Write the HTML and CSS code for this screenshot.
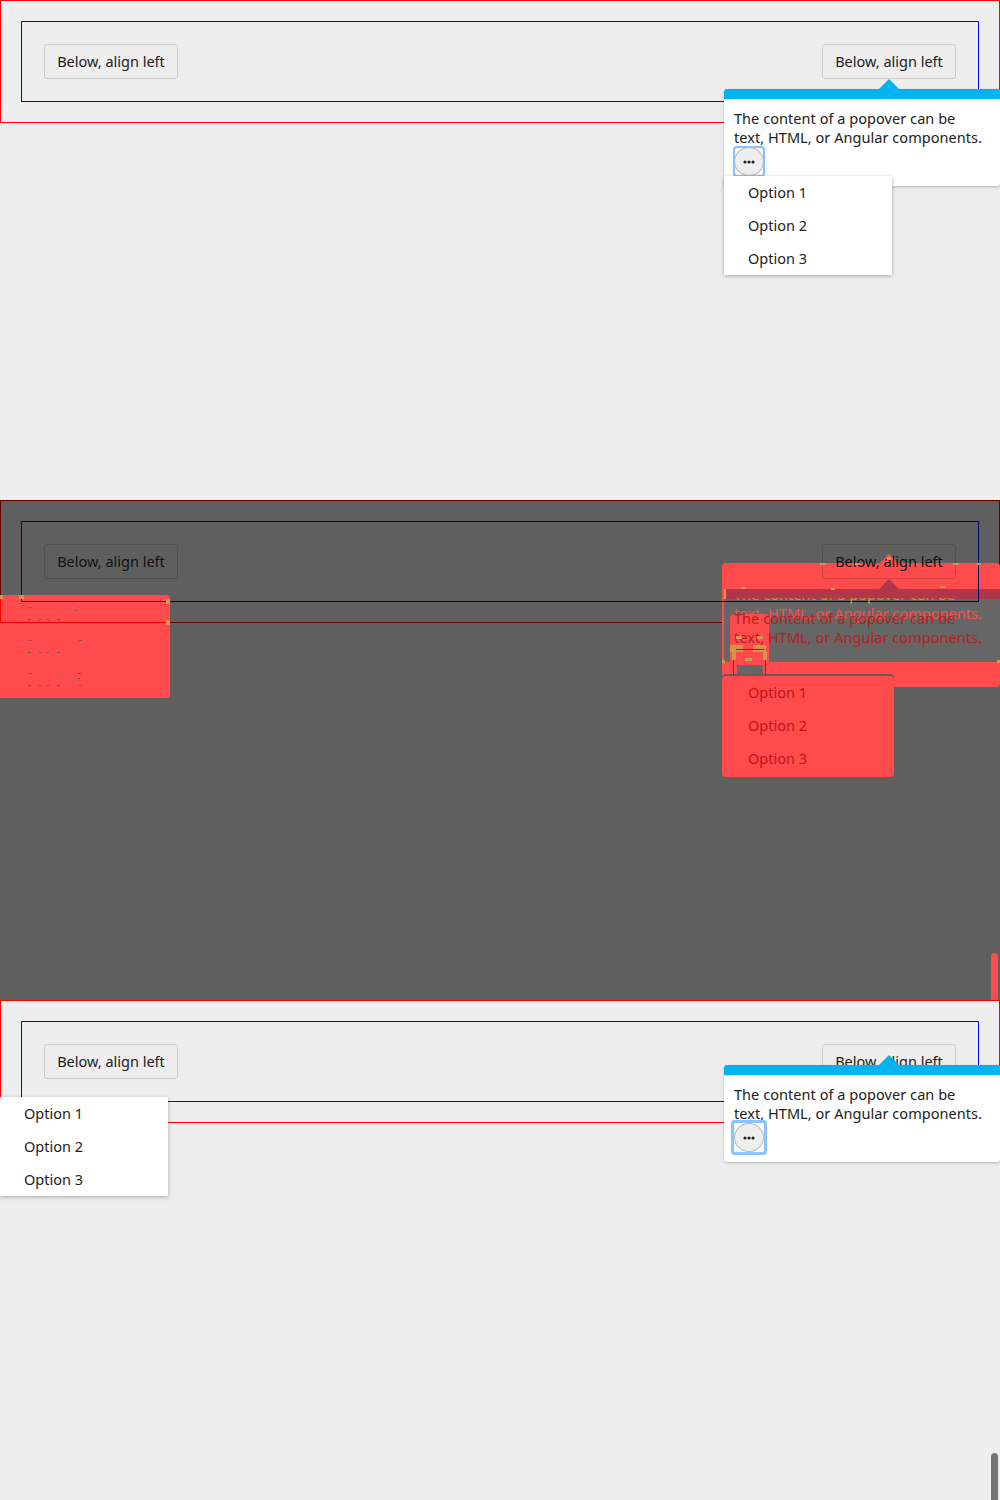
FILE: index.html
```html
<!DOCTYPE html>
<html lang="en">
<head>
<meta charset="utf-8">
<title>Popover visual diff</title>
<link rel="stylesheet" href="styles.css">
</head>
<body>

<section class="shot">
  <div class="host"><div class="box"><button class="btn">Below, align left</button><button class="btn">Below, align left</button></div></div>
  <div class="popover popover-a">
    <span class="arrow"></span>
    <div class="pop-head"></div>
    <div class="pop-body">
      <p class="pop-text">The content of a popover can be text, HTML, or Angular components.</p>
      <button class="more more-thin"><svg width="12" height="4" viewBox="0 0 12 4"><circle cx="2" cy="2" r="1.6"/><circle cx="6" cy="2" r="1.6"/><circle cx="10" cy="2" r="1.6"/></svg></button>
    </div>
  </div>
  <ul class="menu menu-a"><li>Option 1</li><li>Option 2</li><li>Option 3</li></ul>
</section>

<section class="shot shot-diff">
  <div class="diff-menu"><i class="line-h"></i><i class="line-v"></i></div>
  <div class="diff-pop"></div>
  <div class="diff-arrow-top"></div>
  <div class="diff-band"></div>
  <div class="diff-arrow-low"></div>
  <div class="diff-same"></div>
  <div class="diff-more"></div>
  <div class="diff-gap"></div>
  <div class="diff-popmenu"></div>
  <div class="host"><div class="box"><button class="btn">Below, align left</button><button class="btn">Below, align left</button></div></div>
  <p class="ghost pop-text ghost-frag">The content of a popover can be</p>
  <p class="ghost pop-text ghost-b">text, HTML, or Angular components.</p>
  <p class="ghost pop-text ghost-a">The content of a popover can be text, HTML, or Angular components.</p>
  <ul class="menu-text"><li>Option 1</li><li>Option 2</li><li>Option 3</li></ul>
  <svg class="specks" width="1000" height="500" viewBox="0 0 1000 500">
    <g class="speck-dark">
      <rect x="28" y="107" width="2" height="1"/><rect x="31" y="107" width="1" height="1"/><rect x="58" y="109" width="1" height="1"/><rect x="75" y="110" width="2" height="1"/><rect x="78" y="107" width="1" height="1"/>
      <rect x="28" y="119" width="3" height="1"/><rect x="39" y="119" width="2" height="1"/><rect x="47" y="119" width="2" height="1"/><rect x="57" y="119" width="3" height="1"/>
      <rect x="28" y="140" width="2" height="1"/><rect x="31" y="140" width="1" height="1"/><rect x="58" y="143" width="1" height="1"/><rect x="79" y="140" width="3" height="1"/>
      <rect x="28" y="152" width="3" height="1"/><rect x="39" y="152" width="2" height="1"/><rect x="47" y="152" width="2" height="1"/><rect x="57" y="152" width="3" height="1"/>
      <rect x="28" y="173" width="2" height="1"/><rect x="31" y="173" width="1" height="1"/><rect x="58" y="176" width="1" height="1"/><rect x="78" y="173" width="3" height="1"/><rect x="78" y="178" width="2" height="1"/>
      <rect x="28" y="185" width="3" height="1"/><rect x="39" y="185" width="2" height="1"/><rect x="47" y="185" width="2" height="1"/><rect x="57" y="185" width="3" height="1"/><rect x="79" y="185" width="2" height="1"/>
    </g>
    <g class="speck-orange">
      <rect x="0" y="95" width="3" height="4"/><rect x="19" y="95" width="5" height="4"/><rect x="166" y="99" width="4" height="5"/><rect x="166" y="120" width="4" height="5"/>
      <rect x="820" y="63" width="6" height="2"/><rect x="855" y="63" width="5" height="2"/><rect x="887" y="57" width="4" height="3"/><rect x="953" y="63" width="6" height="2"/><rect x="976" y="63" width="5" height="2"/>
      <rect x="724" y="89" width="2" height="10"/><rect x="741" y="87" width="5" height="2"/><rect x="831" y="88" width="4" height="2"/><rect x="940" y="86" width="5" height="2"/>
      <rect x="722" y="160" width="3" height="3"/><rect x="997" y="160" width="3" height="3"/>
      <rect x="730" y="145" width="13" height="7"/><rect x="753" y="145" width="13" height="7"/>
      <rect x="732" y="152" width="4" height="8"/><rect x="763" y="152" width="4" height="8"/>
      <rect x="745" y="158" width="7" height="3"/>
      <rect x="736" y="136" width="6" height="3"/><rect x="757" y="136" width="6" height="3"/>
    </g>
    <g class="speck-line">
      <rect x="736" y="149" width="28" height="1"/><rect x="733" y="160" width="1" height="16"/><rect x="765" y="160" width="1" height="16"/>
    </g>
  </svg>
  <span class="thumb thumb-red"></span>
</section>

<section class="shot">
  <div class="host"><div class="box"><button class="btn">Below, align left</button><button class="btn">Below, align left</button></div></div>
  <ul class="menu menu-c"><li>Option 1</li><li>Option 2</li><li>Option 3</li></ul>
  <div class="popover popover-c">
    <span class="arrow"></span>
    <div class="pop-head"></div>
    <div class="pop-body">
      <p class="pop-text">The content of a popover can be text, HTML, or Angular components.</p>
      <button class="more more-thick"><svg width="12" height="4" viewBox="0 0 12 4"><circle cx="2" cy="2" r="1.6"/><circle cx="6" cy="2" r="1.6"/><circle cx="10" cy="2" r="1.6"/></svg></button>
    </div>
  </div>
  <span class="thumb"></span>
</section>

</body>
</html>
```

FILE: styles.css
```css
* { box-sizing: border-box; }
html, body { margin: 0; padding: 0; }
body {
  width: 1000px;
  height: 1500px;
  overflow: hidden;
  background: #eee;
  color: #212121;
  font-family: "Noto Sans", "Liberation Sans", sans-serif;
  font-size: 14.5px;
  line-height: 19px;
}

.shot { position: relative; height: 500px; overflow: hidden; background: #eee; }

.host { border: 1px solid #f00; padding: 20px; }
.box {
  position: relative;
  display: flex;
  justify-content: space-between;
  border: 1px solid #00f;
  padding: 22px;
}
.btn {
  display: block;
  width: 134px;
  padding: 7px 0;
  border: 1px solid #ccc;
  border-radius: 3px;
  background: transparent;
  color: inherit;
  font: inherit;
  text-align: center;
}

/* Popover */
.popover {
  position: absolute;
  left: 724px;
  width: 276px;
  border-radius: 3px;
  background: #fff;
  box-shadow: 0 1px 3px rgba(0, 0, 0, .25);
}
.popover-a { top: 89px; }
.popover-c { top: 65px; }
.pop-head { height: 10px; border-radius: 3px 3px 0 0; background: #00b4f0; }
.arrow {
  position: absolute;
  left: 155px;
  top: -10px;
  width: 0;
  height: 0;
  border-left: 10px solid transparent;
  border-right: 10px solid transparent;
  border-bottom: 10px solid #00b4f0;
}
.pop-body { padding: 10px; }
.pop-text { margin: 0; width: 252px; letter-spacing: .05px; }

.more {
  position: relative;
  display: flex;
  align-items: center;
  justify-content: center;
  width: 30px;
  height: 29px;
  padding: 0;
  border: 1px solid #bbb;
  border-radius: 50%;
  background: #eee;
  color: #212121;
  fill: currentColor;
}
.more::before {
  content: "";
  position: absolute;
  border-style: solid;
  border-color: #8cc3fb;
  border-radius: 4px;
  box-shadow: 0 0 1px #8cc3fb, inset 0 0 1px #8cc3fb;
}
.more-thin::before { inset: -2px; border-width: 2px; }
.more-thick::before { inset: -4px; border-width: 3px; }

/* Menu */
.menu, .menu-text { list-style: none; margin: 0; padding: 0; position: absolute; width: 168px; }
.menu { background: #fff; box-shadow: 0 1px 4px rgba(0, 0, 0, .3); }
.menu li, .menu-text li { padding: 7px 24px; }
.menu-a { left: 724px; top: 176px; }
.menu-c { left: 0; top: 97px; }

/* Scrollbar thumb */
.thumb {
  position: absolute;
  left: 991px;
  top: 453px;
  width: 7px;
  height: 47px;
  border-radius: 4px 4px 0 0;
  background: #757575;
}
.thumb-red { background: #ff4b4b; }

/* Diff panel: the same page at 40% brightness, differences in red */
.shot-diff { background: #5f5f5f; color: #111; }
.shot-diff .host { border-color: #660000; }
.shot-diff .box { z-index: 2; border-color: #000066; }
.shot-diff .btn { border-color: rgba(0, 0, 0, .15); }

.diff-menu {
  position: absolute;
  left: 0;
  top: 95px;
  width: 170px;
  height: 103px;
  border-radius: 0 4px 4px 0;
  background: #ff4b4b;
  z-index: 1;
}
.line-h { position: absolute; left: 0; right: 4px; top: 27px; height: 1px; background: #f00; }
.line-v { position: absolute; left: 0; top: 0; width: 1px; height: 28px; background: #f00; }

.diff-pop, .diff-arrow-top, .diff-band, .diff-arrow-low, .diff-same, .diff-more, .diff-gap, .diff-popmenu { position: absolute; }
.diff-pop { left: 722px; top: 63px; width: 278px; height: 124px; border-radius: 4px; background: #ff4b4b; }
.diff-arrow-top {
  left: 879px; top: 54px; width: 0; height: 0;
  border-left: 10px solid transparent;
  border-right: 10px solid transparent;
  border-bottom: 10px solid #ff4b4b;
}
.diff-band { left: 724px; top: 89px; width: 276px; height: 10px; background: #b0374a; }
.diff-arrow-low {
  left: 879px; top: 79px; width: 0; height: 0;
  border-left: 10px solid transparent;
  border-right: 10px solid transparent;
  border-bottom: 10px solid #b0374a;
}
.diff-same { left: 724px; top: 99px; width: 276px; height: 63px; background: #666; }
.diff-more { left: 730px; top: 114px; width: 39px; height: 62px; border-radius: 4px; background: #ff4b4b; }
.diff-gap { left: 737px; top: 165px; width: 26px; height: 9px; background: #666; }
.diff-popmenu {
  left: 722px; top: 174px; width: 172px; height: 103px;
  border-radius: 4px;
  background: #ff4b4b;
  box-shadow: inset 0 2px 0 #6b5a5a;
}

.ghost { position: absolute; left: 734px; z-index: 3; }
.ghost-a { top: 109px; color: #b5221c; }
.ghost-b { top: 104px; color: #ff4b4b; }
.ghost-frag { top: 85px; color: #c9913c; clip-path: inset(13px 0 0 0); }
.menu-text { left: 724px; top: 176px; color: #bd1420; z-index: 3; }

.specks { position: absolute; left: 0; top: 0; z-index: 4; }
.speck-dark { fill: #6e5a5a; }
.speck-orange { fill: #d0964a; }
.speck-line { fill: #8a2a30; }
```
